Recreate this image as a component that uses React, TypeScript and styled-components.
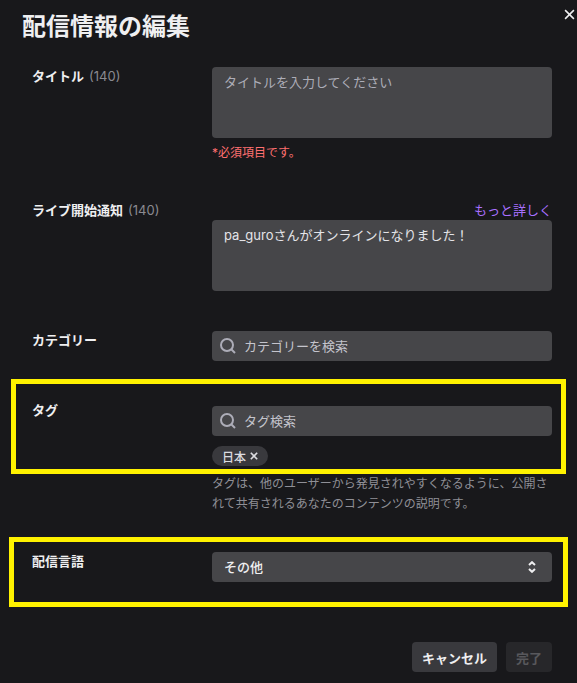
import React from 'react'
import styled, { createGlobalStyle } from 'styled-components'

const GlobalStyle = createGlobalStyle`
  html, body {
    margin: 0;
    padding: 0;
    background: #18181b;
  }
  body {
    font-family: Inter, "Noto Sans CJK JP", sans-serif;
    color: #efeff1;
  }
`

const Modal = styled.div`
  position: relative;
  width: 577px;
  height: 683px;
  box-sizing: border-box;
  background: #18181b;
  padding: 12px 25px 0 32px;
  overflow: hidden;
`

const Title = styled.h1`
  margin: 0 0 0 -10px;
  height: 30px;
  font-size: 24px;
  line-height: 30px;
  font-weight: 700;
  color: #efeff1;
`

const CloseButton = styled.button`
  position: absolute;
  top: 9px;
  right: 2px;
  width: 11px;
  height: 11px;
  padding: 0;
  border: none;
  background: none;
  color: #efeff1;
  display: flex;
`

const Row = styled.div<{ $top: number; $height: number }>`
  position: relative;
  display: grid;
  grid-template-columns: 180px 340px;
  margin-top: ${(p) => p.$top}px;
  min-height: ${(p) => p.$height}px;
`

const Label = styled.div<{ $offset?: number }>`
  font-size: 13px;
  line-height: 20px;
  font-weight: 700;
  margin-top: ${(p) => p.$offset ?? -1}px;
`

const Count = styled.span`
  font-weight: 400;
  color: #8a8a90;
  margin-left: 5px;
`

const Field = styled.div<{ $offset?: number }>`
  display: flex;
  flex-direction: column;
  margin-top: ${(p) => p.$offset ?? 0}px;
`

const TextArea = styled.div<{ $filled?: boolean }>`
  height: 71px;
  box-sizing: border-box;
  padding: 5px 12px;
  background: #464649;
  border-radius: 4px;
  font-size: 13px;
  line-height: 20px;
  color: ${(p) => (p.$filled ? '#e4e4e8' : '#adadb8')};
`

const ErrorText = styled.div`
  margin-top: 5px;
  font-size: 12px;
  line-height: 20px;
  color: #ff7070;
`

const LinkLine = styled.div`
  height: 20px;
  text-align: right;
  font-size: 13px;
  line-height: 20px;
  color: #a970ff;
`

const InputBox = styled.div`
  height: 30px;
  box-sizing: border-box;
  display: flex;
  align-items: center;
  gap: 7px;
  padding: 0 7px;
  background: #464649;
  border-radius: 4px;
  font-size: 13px;
  color: #c4c4cc;

  span {
    padding-bottom: 2px;
  }

  svg {
    color: #adadb8;
    flex: none;
  }
`

const Chip = styled.div`
  align-self: flex-start;
  margin-top: 10px;
  height: 20px;
  box-sizing: border-box;
  display: flex;
  align-items: center;
  gap: 4px;
  padding: 0 10px;
  border-radius: 10px;
  background: #39393d;
  font-size: 12px;
  font-weight: 500;
  color: #dcdce0;
`

const HelpText = styled.p`
  margin: 8px 0 0;
  font-size: 12px;
  line-height: 20px;
  color: #8f8f96;
`

const SelectBox = styled.div`
  height: 30px;
  box-sizing: border-box;
  display: flex;
  align-items: center;
  justify-content: space-between;
  padding: 0 16px 2px 12px;
  background: #464649;
  border-radius: 4px;
  font-size: 13px;
  font-weight: 500;
  color: #efeff1;

  svg {
    margin-bottom: -2px;
  }
`

const Highlight = styled.div<{ $inset: string }>`
  position: absolute;
  inset: ${(p) => p.$inset};
  border: 5px solid #fff200;
  pointer-events: none;
`

const Footer = styled.div`
  display: flex;
  justify-content: flex-end;
  gap: 9px;
  margin-top: 60px;
`

const Button = styled.button<{ $disabled?: boolean }>`
  height: 30px;
  width: ${(p) => (p.$disabled ? 46 : 85)}px;
  padding: 0;
  border: none;
  border-radius: 4px;
  font-family: inherit;
  font-size: 13px;
  font-weight: 700;
  background: ${(p) => (p.$disabled ? '#27272a' : '#39393d')};
  color: ${(p) => (p.$disabled ? '#58585c' : '#efeff1')};
`

function SearchIcon() {
  return (
    <svg width="18" height="18" viewBox="0 0 18 18" fill="none" stroke="currentColor" strokeWidth="2">
      <circle cx="8" cy="8" r="6" />
      <path d="M12.5 12.5L16 16" />
    </svg>
  )
}

function CloseIcon({ size, width }: { size: number; width: number }) {
  return (
    <svg width={size} height={size} viewBox="0 0 10 10" fill="none" stroke="currentColor" strokeWidth={width}>
      <path d="M1 1L9 9M9 1L1 9" />
    </svg>
  )
}

function UpDownIcon() {
  return (
    <svg width="8" height="12" viewBox="0 0 8 12" fill="none" stroke="currentColor" strokeWidth="2">
      <path d="M1 4L4 1.2L7 4M1 8L4 10.8L7 8" />
    </svg>
  )
}

export default function App() {
  return (
    <Modal>
      <GlobalStyle />
      <Title>配信情報の編集</Title>
      <CloseButton>
        <CloseIcon size={11} width={1.4} />
      </CloseButton>

      <Row $top={25} $height={113}>
        <Label>
          タイトル<Count>(140)</Count>
        </Label>
        <Field>
          <TextArea>タイトルを入力してください</TextArea>
          <ErrorText>*必須項目です。</ErrorText>
        </Field>
      </Row>

      <Row $top={20} $height={91}>
        <Label $offset={0}>
          ライブ開始通知<Count>(140)</Count>
        </Label>
        <Field>
          <LinkLine>もっと詳しく</LinkLine>
          <TextArea $filled>pa_guroさんがオンラインになりました！</TextArea>
        </Field>
      </Row>

      <Row $top={40} $height={30}>
        <Label>カテゴリー</Label>
        <Field>
          <InputBox>
            <SearchIcon />
            <span>カテゴリーを検索</span>
          </InputBox>
        </Field>
      </Row>

      <Row $top={30} $height={106}>
        <Highlight $inset="-12px -14px 40px -21px" />
        <Label $offset={9}>タグ</Label>
        <Field $offset={15}>
          <InputBox>
            <SearchIcon />
            <span>タグ検索</span>
          </InputBox>
          <Chip>
            日本
            <CloseIcon size={8} width={2} />
          </Chip>
          <HelpText>
            タグは、他のユーザーから発見されやすくなるように、公開されて共有されるあなたのコンテンツの説明です。
          </HelpText>
        </Field>
      </Row>

      <Row $top={38} $height={30}>
        <Highlight $inset="-15px -16px -25px -23px" />
        <Label>配信言語</Label>
        <Field>
          <SelectBox>
            <span>その他</span>
            <UpDownIcon />
          </SelectBox>
        </Field>
      </Row>

      <Footer>
        <Button>キャンセル</Button>
        <Button $disabled>完了</Button>
      </Footer>
    </Modal>
  )
}
